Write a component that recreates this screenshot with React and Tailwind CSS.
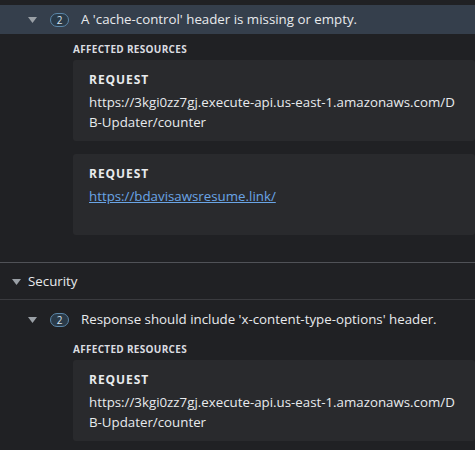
import { useState } from 'react';

const font = { fontFamily: '"Segoe UI", "Open Sans", "Noto Sans", sans-serif' };

function Caret({ className = '' }) {
    return (
        <svg width="9" height="6" viewBox="0 0 9 6" className={className}>
            <path d="M0 0 H9 L4.5 6 Z" fill="#9aa0a6" />
        </svg>
    );
}

function CountBadge({ count }) {
    return (
        <span className="flex h-[14px] w-[19px] items-center justify-center rounded-full border border-[#5b86a8] bg-[#2a3a48] text-[10px] leading-none text-[#d5e1ec]">
            {count}
        </span>
    );
}

function RequestCard({ url, link }) {
    return (
        <div className="min-h-[81px] rounded-[3px] bg-[#292a2d] pl-4 pr-4 pt-3 pb-[9px]">
            <div className="text-[12px] font-bold leading-4 tracking-[0.08em] text-[#e8eaed]">REQUEST</div>
            {link ? (
                <a href="#" className="mt-1 block text-[13.3px] leading-5 text-[#6aa5e6] underline">
                    {url}
                </a>
            ) : (
                <div className="mt-1 break-all text-[13.3px] leading-5 text-[#e8eaed]">{url}</div>
            )}
        </div>
    );
}

function Issue({ title, count, highlighted, resources }) {
    const [open, setOpen] = useState(true);
    return (
        <div className="pt-[5px]">
            <div
                onClick={() => setOpen(!open)}
                className={`flex h-[29px] cursor-pointer items-center pl-[28px] ${highlighted ? 'bg-[#353f4c]' : ''}`}
            >
                <Caret />
                <span className="ml-[13px]">
                    <CountBadge count={count} />
                </span>
                <span className="ml-3 text-[13.3px] text-[#e8eaed]">{title}</span>
            </div>
            {open && (
                <div className="pl-[73px]">
                    <div className="mt-[9px] text-[10px] font-bold leading-3 tracking-[0.03em] text-[#dadce0]">
                        AFFECTED RESOURCES
                    </div>
                    <div className="mt-[5px] flex flex-col gap-[13px]">
                        {resources.map((r, i) => (
                            <RequestCard key={i} url={r.url} link={r.link} />
                        ))}
                    </div>
                </div>
            )}
        </div>
    );
}

export default function App() {
    const apiUrl = 'https://3kgi0zz7gj.execute-api.us-east-1.amazonaws.com/DB-Updater/counter';
    return (
        <div className="h-[450px] w-[475px] overflow-hidden bg-[#202124]" style={font}>
            <Issue
                highlighted
                count={2}
                title="A 'cache-control' header is missing or empty."
                resources={[
                    { url: apiUrl },
                    { url: 'https://bdavisawsresume.link/', link: true },
                ]}
            />

            {/* Security category */}
            <div className="mt-[27px] flex h-[38px] items-center border-t border-b border-t-[#505257] border-b-[#3a3b3f] pl-3 pt-[2px]">
                <Caret />
                <span className="ml-[7px] text-[13.3px] text-[#e8eaed]">Security</span>
            </div>

            <Issue
                count={2}
                title="Response should include 'x-content-type-options' header."
                resources={[{ url: apiUrl }]}
            />
        </div>
    );
}
